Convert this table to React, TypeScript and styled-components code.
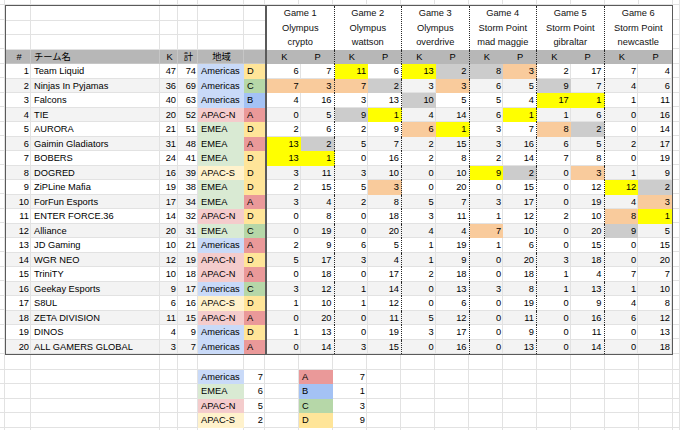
import React from 'react';
import styled, { createGlobalStyle } from 'styled-components';

const ROW = 14.5;
const GRID = '#e2e2e2';
const LINE = '#5a5a5a';
const DOT = '#2a2a2a';
const BAND = '#f3f3f3';
const HEAD = '#b7b7b7';

const FILL: Record<string, string> = {
  y: '#ffff00',
  s: '#cccccc',
  o: '#f9cb9c',
  Americas: '#c9daf8',
  EMEA: '#d9ead3',
  'APAC-N': '#f4cccc',
  'APAC-S': '#fff2cc',
  A: '#ea9999',
  B: '#a4c2f4',
  C: '#b6d7a8',
  D: '#ffe599',
};

const TABLE_COLS = '25px 129px 18px 20px 46px 23px repeat(12, minmax(0, 1fr))';
const SHEET_COLS = '5px 26px 129px 18px 20px 46px 21px repeat(12, minmax(0, 1fr)) 7px';

const Global = createGlobalStyle`
  html, body { margin: 0; padding: 0; background: #fff; overflow: hidden; }
  body {
    font-family: "Liberation Sans", Arial, "Noto Sans CJK JP", sans-serif;
    font-size: 9.3px;
    color: #000;
  }
`;

type Align = 'left' | 'right' | 'center';

const Page = styled.div`
  width: 680px;
  height: 430px;
  overflow: hidden;
  display: flex;
  flex-direction: column;
`;

const Strip = styled.div<{ $h: number }>`
  display: grid;
  grid-template-columns: ${SHEET_COLS};
  grid-auto-rows: ${(p) => p.$h}px;
`;

const Middle = styled.div`
  display: flex;
`;

const Gutter = styled.div<{ $w: number }>`
  width: ${(p) => p.$w}px;
  height: ${24 * ROW + 2}px;
  flex: none;
  background-image: repeating-linear-gradient(
    to bottom,
    transparent 0 ${ROW - 1}px,
    ${GRID} ${ROW - 1}px ${ROW}px
  );
  background-position: 0 1px;
  box-shadow: inset -1px 0 0 ${GRID};
`;

const Table = styled.div`
  box-sizing: border-box;
  width: 668px;
  flex: none;
  border: 1px solid ${LINE};
  display: flex;
  flex-direction: column;
`;

const HeaderBlock = styled.div`
  display: grid;
  grid-template-columns: ${TABLE_COLS};
  grid-template-rows: repeat(3, ${ROW}px);
`;

const GameHead = styled.div<{ $i: number; $last: boolean }>`
  grid-row: 1 / span 3;
  grid-column: ${(p) => 7 + p.$i * 2} / span 2;
  display: flex;
  flex-direction: column;
  align-items: center;
  color: #111;
  border-right: ${(p) => (p.$last ? 'none' : `1px dotted ${DOT}`)};
`;

const HeadLine = styled.div`
  height: ${ROW}px;
  line-height: ${ROW}px;
  white-space: nowrap;
`;

const Row = styled.div<{ $band?: string }>`
  display: grid;
  grid-template-columns: ${TABLE_COLS};
  background: ${(p) => p.$band ?? '#fff'};
`;

const Cell = styled.div<{
  $align?: Align;
  $fill?: string;
  $dotted?: boolean;
  $thick?: boolean;
  $grid?: string;
  $h?: number;
}>`
  box-sizing: border-box;
  height: ${(p) => p.$h ?? ROW}px;
  line-height: ${ROW}px;
  padding: 0 2px 0 3px;
  white-space: nowrap;
  overflow: hidden;
  text-align: ${(p) => p.$align ?? 'left'};
  background: ${(p) => p.$fill ?? 'transparent'};
  box-shadow: ${(p) =>
    p.$fill
      ? 'none'
      : p.$dotted || p.$thick
      ? `inset 0 -1px 0 ${p.$grid ?? GRID}`
      : `inset -1px -1px 0 ${p.$grid ?? GRID}`};
  border-right: ${(p) =>
    p.$thick ? `2px solid ${LINE}` : p.$dotted ? `1px dotted ${DOT}` : 'none'};
`;

const games = [
  ['Game 1', 'Olympus', 'crypto'],
  ['Game 2', 'Olympus', 'wattson'],
  ['Game 3', 'Olympus', 'overdrive'],
  ['Game 4', 'Storm Point', 'mad maggie'],
  ['Game 5', 'Storm Point', 'gibraltar'],
  ['Game 6', 'Storm Point', 'newcastle'],
];

type Team = [string, number, number, string, string, string[]];

const teams: Team[] = [
  ['Team Liquid', 47, 74, 'Americas', 'D', ['6', '7', '11y', '6', '13y', '2s', '8s', '3o', '2', '17', '7', '4']],
  ['Ninjas In Pyjamas', 36, 69, 'Americas', 'C', ['7o', '3o', '7o', '2s', '3', '3o', '6', '5', '9s', '7', '4', '6']],
  ['Falcons', 40, 63, 'Americas', 'B', ['4', '16', '3', '13', '10s', '5', '5', '4', '17y', '1y', '1', '11']],
  ['TIE', 20, 52, 'APAC-N', 'A', ['0', '5', '9s', '1y', '4', '14', '6', '1y', '1', '6', '0', '16']],
  ['AURORA', 21, 51, 'EMEA', 'D', ['2', '6', '2', '9', '6o', '1y', '3', '7', '8o', '2s', '0', '14']],
  ['Gaimin Gladiators', 31, 48, 'EMEA', 'A', ['13y', '2s', '5', '7', '2', '15', '3', '16', '6', '5', '2', '17']],
  ['BOBERS', 24, 41, 'EMEA', 'D', ['13y', '1y', '0', '16', '2', '8', '2', '14', '7', '8', '0', '19']],
  ['DOGRED', 16, 39, 'APAC-S', 'D', ['3', '11', '3', '10', '0', '10', '9y', '2s', '0', '3o', '1', '9']],
  ['ZiPLine Mafia', 19, 38, 'EMEA', 'D', ['2', '15', '5', '3o', '0', '20', '0', '15', '0', '12', '12y', '2s']],
  ['ForFun Esports', 17, 34, 'EMEA', 'A', ['3', '4', '2', '8', '5', '7', '3', '17', '0', '19', '4', '3o']],
  ['ENTER FORCE.36', 14, 32, 'APAC-N', 'D', ['0', '8', '0', '18', '3', '11', '1', '12', '2', '10', '8o', '1y']],
  ['Alliance', 20, 31, 'EMEA', 'C', ['0', '19', '0', '20', '4', '4', '7o', '10', '0', '20', '9s', '5']],
  ['JD Gaming', 10, 21, 'Americas', 'A', ['2', '9', '6', '5', '1', '19', '1', '6', '0', '15', '0', '15']],
  ['WGR NEO', 12, 19, 'APAC-N', 'D', ['5', '17', '3', '4', '1', '9', '0', '20', '3', '18', '0', '20']],
  ['TriniTY', 10, 18, 'APAC-N', 'A', ['0', '18', '0', '17', '2', '18', '0', '18', '1', '4', '7', '7']],
  ['Geekay Esports', 9, 17, 'Americas', 'C', ['3', '12', '1', '14', '0', '13', '3', '8', '1', '13', '1', '10']],
  ['S8UL', 6, 16, 'APAC-S', 'D', ['1', '10', '1', '12', '0', '6', '0', '19', '0', '9', '4', '8']],
  ['ZETA DIVISION', 11, 15, 'APAC-N', 'A', ['0', '20', '0', '11', '5', '12', '0', '11', '0', '16', '6', '12']],
  ['DINOS', 4, 9, 'Americas', 'D', ['1', '13', '0', '19', '3', '17', '0', '9', '0', '11', '0', '13']],
  ['ALL GAMERS GLOBAL', 3, 7, 'Americas', 'A', ['0', '14', '3', '15', '0', '16', '0', '13', '0', '14', '0', '18']],
];

const regionSummary: [string, number][] = [
  ['Americas', 7],
  ['EMEA', 6],
  ['APAC-N', 5],
  ['APAC-S', 2],
];
const groupSummary: [string, number][] = [
  ['A', 7],
  ['B', 1],
  ['C', 3],
  ['D', 9],
];

const SHEET_COL_COUNT = 20;

function parseScore(s: string): { v: string; fill?: string } {
  const last = s[s.length - 1];
  if (last === 'y' || last === 's' || last === 'o') return { v: s.slice(0, -1), fill: FILL[last] };
  return { v: s };
}

function BelowRow({ index }: { index: number }) {
  const r = index >= 1 && index <= 4 ? regionSummary[index - 1] : null;
  const g = index >= 1 && index <= 4 ? groupSummary[index - 1] : null;
  return (
    <>
      {Array.from({ length: SHEET_COL_COUNT }, (_, c) => {
        if (r && c === 5) return <Cell key={c} $fill={FILL[r[0]]}>{r[0]}</Cell>;
        if (r && c === 6) return <Cell key={c} $align="right">{r[1]}</Cell>;
        if (g && c === 8) return <Cell key={c} $fill={FILL[g[0]]}>{g[0]}</Cell>;
        if (g && c === 9) return <Cell key={c} $align="right">{g[1]}</Cell>;
        return <Cell key={c} />;
      })}
    </>
  );
}

export default function App() {
  return (
    <>
      <Global />
      <Page>
        <Strip $h={5}>
          {Array.from({ length: SHEET_COL_COUNT }, (_, c) => (
            <Cell key={c} $h={5} />
          ))}
        </Strip>
        <Middle>
          <Gutter $w={5} />
          <Table>
            <HeaderBlock>
              {games.map((g, i) => (
                <GameHead key={i} $i={i} $last={i === games.length - 1}>
                  {g.map((line, j) => (
                    <HeadLine key={j}>{line}</HeadLine>
                  ))}
                </GameHead>
              ))}
              {Array.from({ length: 18 }, (_, k) => (
                <Cell key={`h${k}`} $thick={k % 6 === 5} />
              ))}
            </HeaderBlock>
            <Row $band={HEAD}>
              <Cell $align="center" $grid="#c6c6c6">#</Cell>
              <Cell $grid="#c6c6c6">チーム名</Cell>
              <Cell $align="center" $grid="#c6c6c6">K</Cell>
              <Cell $align="center" $grid="#c6c6c6">計</Cell>
              <Cell $align="center" $grid="#c6c6c6">地域</Cell>
              <Cell $thick $grid="#c6c6c6" />
              {games.map((_, i) => (
                <React.Fragment key={i}>
                  <Cell $align="center" $grid={HEAD}>K</Cell>
                  <Cell $align="center" $grid={HEAD} $dotted={i < games.length - 1}>
                    P
                  </Cell>
                </React.Fragment>
              ))}
            </Row>
            {teams.map(([name, k, total, region, group, scores], i) => (
              <Row key={name} $band={i % 2 === 1 ? BAND : '#fff'}>
                <Cell $align="right">{i + 1}</Cell>
                <Cell>{name}</Cell>
                <Cell $align="right">{k}</Cell>
                <Cell $align="right">{total}</Cell>
                <Cell $fill={FILL[region]}>{region}</Cell>
                <Cell $fill={FILL[group]} $thick>
                  {group}
                </Cell>
                {scores.map((s, j) => {
                  const { v, fill } = parseScore(s);
                  return (
                    <Cell
                      key={j}
                      $align="right"
                      $fill={fill}
                      $dotted={j % 2 === 1 && j < scores.length - 1}
                    >
                      {v}
                    </Cell>
                  );
                })}
              </Row>
            ))}
          </Table>
          <Gutter $w={7} />
        </Middle>
        <Strip $h={ROW}>
          {Array.from({ length: 6 }, (_, r) => (
            <BelowRow key={r} index={r} />
          ))}
        </Strip>
      </Page>
    </>
  );
}
